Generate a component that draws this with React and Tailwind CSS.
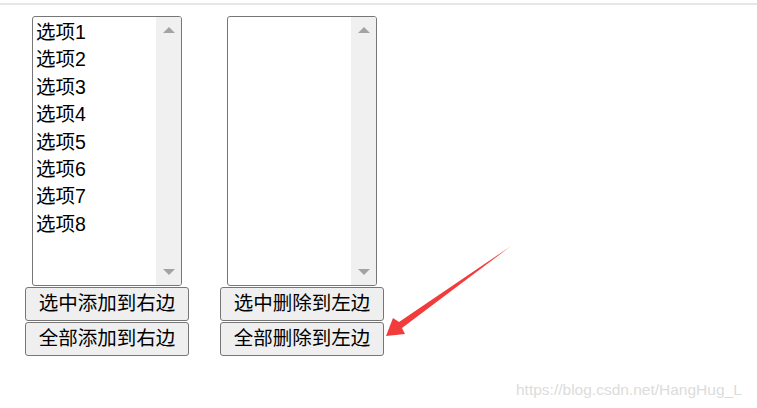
import React from 'react'

const font = { fontFamily: '"Liberation Sans", "Noto Sans CJK SC", sans-serif' }

const ListBox = ({ items }) => (
  <div className="w-[150px] h-[270px] border border-[#767676] rounded-[3px] bg-white flex overflow-hidden">
    <ul className="flex-1 pl-[3px] pt-[2px] text-[19.5px] leading-[27.4px] text-black">
      {items.map((it) => (
        <li key={it}>{it}</li>
      ))}
    </ul>
    {/* scrollbar */}
    <div className="w-[25px] bg-[#f0f0f0] flex flex-col items-center justify-between py-[10px]">
      <div className="w-0 h-0 border-l-[6px] border-r-[6px] border-b-[6px] border-l-transparent border-r-transparent border-b-[#a3a3a3]" />
      <div className="w-0 h-0 border-l-[6px] border-r-[6px] border-t-[6px] border-l-transparent border-r-transparent border-t-[#a3a3a3]" />
    </div>
  </div>
)

const Btn = ({ children }) => (
  <button className="w-[164px] h-[34px] border border-[#767676] rounded-[3px] bg-[#efefef] text-[19.5px] text-black leading-none">
    {children}
  </button>
)

const Column = ({ items, top, bottom }) => (
  <div className="flex flex-col items-center">
    <ListBox items={items} />
    <div className="mt-px flex flex-col gap-px">
      <Btn>{top}</Btn>
      <Btn>{bottom}</Btn>
    </div>
  </div>
)

export default function App() {
  const opts = ['选项1', '选项2', '选项3', '选项4', '选项5', '选项6', '选项7', '选项8']
  return (
    <div className="relative w-[757px] h-[408px] bg-white overflow-hidden" style={font}>
      <div className="mt-[3px] h-[2px] bg-[#e6e6e6]" />
      <div className="mt-[11px] pl-[25px] flex gap-[31px]">
        <Column items={opts} top="选中添加到右边" bottom="全部添加到右边" />
        <Column items={[]} top="选中删除到左边" bottom="全部删除到左边" />
      </div>

      {/* red arrow annotation */}
      <svg className="absolute left-0 top-0 pointer-events-none" width="757" height="408">
        <polygon
          points="386,336 393,318 399,322 511,246 402,328 405,334"
          fill="#f23c3c"
        />
      </svg>

      <div className="absolute left-[516px] top-[378px] text-[15.5px] text-[#dcdcdc]">
        https://blog.csdn.net/HangHug_L
      </div>
    </div>
  )
}
